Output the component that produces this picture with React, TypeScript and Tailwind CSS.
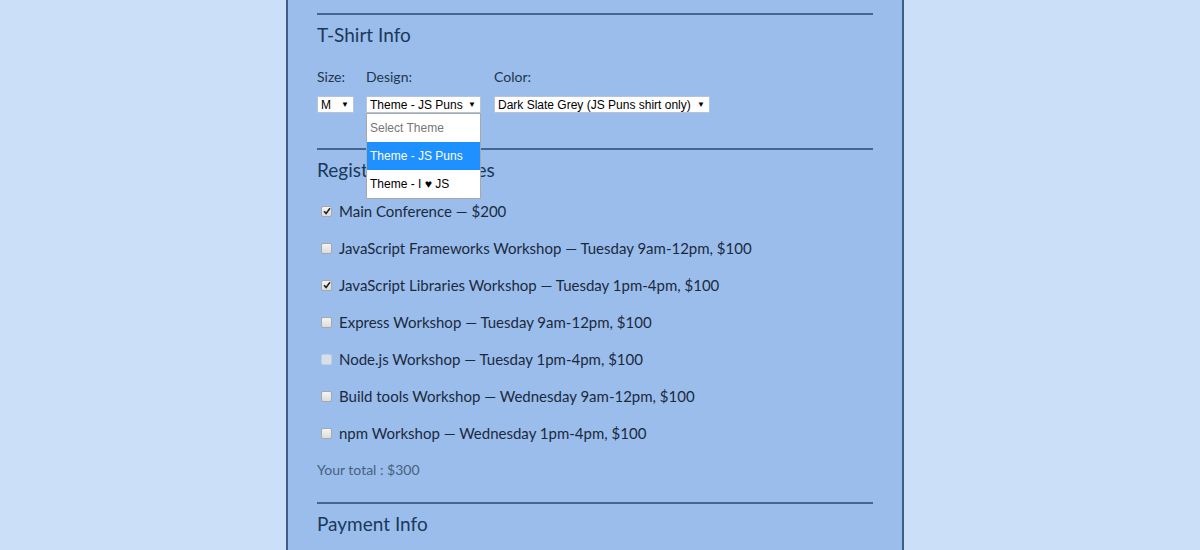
const activities = [
  { label: "Main Conference — $200", checked: true },
  { label: "JavaScript Frameworks Workshop — Tuesday 9am-12pm, $100" },
  { label: "JavaScript Libraries Workshop — Tuesday 1pm-4pm, $100", checked: true },
  { label: "Express Workshop — Tuesday 9am-12pm, $100" },
  { label: "Node.js Workshop — Tuesday 1pm-4pm, $100", disabled: true },
  { label: "Build tools Workshop — Wednesday 9am-12pm, $100" },
  { label: "npm Workshop — Wednesday 1pm-4pm, $100" },
];

const Arrow = () => <span className="text-[8px] leading-none text-black">▼</span>;

const FakeSelect = ({ value, width }: { value: string; width: string }) => (
  <div
    className={`${width} h-[17px] bg-white border border-[#b5c4d6] flex items-center justify-between gap-1 pl-[3px] pr-[4px] text-[12px] text-black whitespace-nowrap`}
    style={{ fontFamily: '"Liberation Sans", Arial, sans-serif' }}
  >
    <span className="leading-none">{value}</span>
    <Arrow />
  </div>
);

const Check = ({ checked, disabled }: { checked?: boolean; disabled?: boolean }) => (
  <span
    className={`w-[11px] h-[11px] rounded-[2px] border flex items-center justify-center ${
      disabled
        ? "border-[#c4cfdc] bg-[#d6dfea]"
        : "border-[#a8a8a8] bg-gradient-to-b from-[#f4f4f4] to-[#dcdcdc]"
    }`}
  >
    {checked && (
      <svg width="8" height="8" viewBox="0 0 8 8">
        <path d="M1 4.2 L3.1 6.4 L7 1.3" fill="none" stroke="#222" strokeWidth="1.6" />
      </svg>
    )}
  </span>
);

const Rule = () => <div className="h-[2px] bg-[#3f6893]" />;

export default function App() {
  return (
    <div
      className="w-[1200px] h-[550px] overflow-hidden bg-[#cbdff9]"
      style={{ fontFamily: 'Lato, "Open Sans", sans-serif' }}
    >
      <div className="ml-[286px] w-[618px] h-[550px] bg-[#9bbdec] border-x-2 border-[#3d5f86] px-[29px] pt-[13px]">
        <Rule />
        <h2 className="mt-[8px] h-6 leading-6 text-[19px] text-[#19395a]">T-Shirt Info</h2>

        <div className="mt-[20px] flex text-[14px] text-[#22364a]">
          <div className="w-[49px]">
            <div className="h-5 leading-5">Size:</div>
            <div className="mt-[9px]">
              <FakeSelect value="M" width="w-[37px]" />
            </div>
          </div>
          <div className="w-[128px] relative">
            <div className="h-5 leading-5">Design:</div>
            <div className="mt-[9px]">
              <FakeSelect value="Theme - JS Puns" width="w-[115px]" />
            </div>
            <div
              className="absolute left-0 top-[46px] w-[115px] bg-white border border-[#a9a9a9] z-10 text-[12px]"
              style={{ fontFamily: '"Liberation Sans", Arial, sans-serif' }}
            >
              <div className="h-[28px] flex items-center pl-[3px] text-[#777]">Select Theme</div>
              <div className="h-[28px] flex items-center pl-[3px] bg-[#1e90ff] text-white">Theme - JS Puns</div>
              <div className="h-[28px] flex items-center pl-[3px] text-black">Theme - I ♥ JS</div>
            </div>
          </div>
          <div>
            <div className="h-5 leading-5">Color:</div>
            <div className="mt-[9px]">
              <FakeSelect value="Dark Slate Grey (JS Puns shirt only)" width="w-[216px]" />
            </div>
          </div>
        </div>

        <div className="mt-[35px]">
          <Rule />
        </div>
        <h2 className="mt-[8px] h-6 leading-6 text-[19px] text-[#19395a]">Register for Activities</h2>

        <div className="mt-[19px] flex flex-col gap-[17px]">
          {activities.map((a) => (
            <label key={a.label} className="h-5 flex items-center gap-[7px] pl-[4px] text-[15px] text-[#1a2a3c]">
              <Check checked={a.checked} disabled={a.disabled} />
              <span className="leading-5">{a.label}</span>
            </label>
          ))}
        </div>

        <p className="mt-[17px] h-5 leading-5 text-[14px] text-[#47617c]">Your total : $300</p>

        <div className="mt-[22px]">
          <Rule />
        </div>
        <h2 className="mt-[8px] h-6 leading-6 text-[19px] text-[#19395a]">Payment Info</h2>
      </div>
    </div>
  );
}
